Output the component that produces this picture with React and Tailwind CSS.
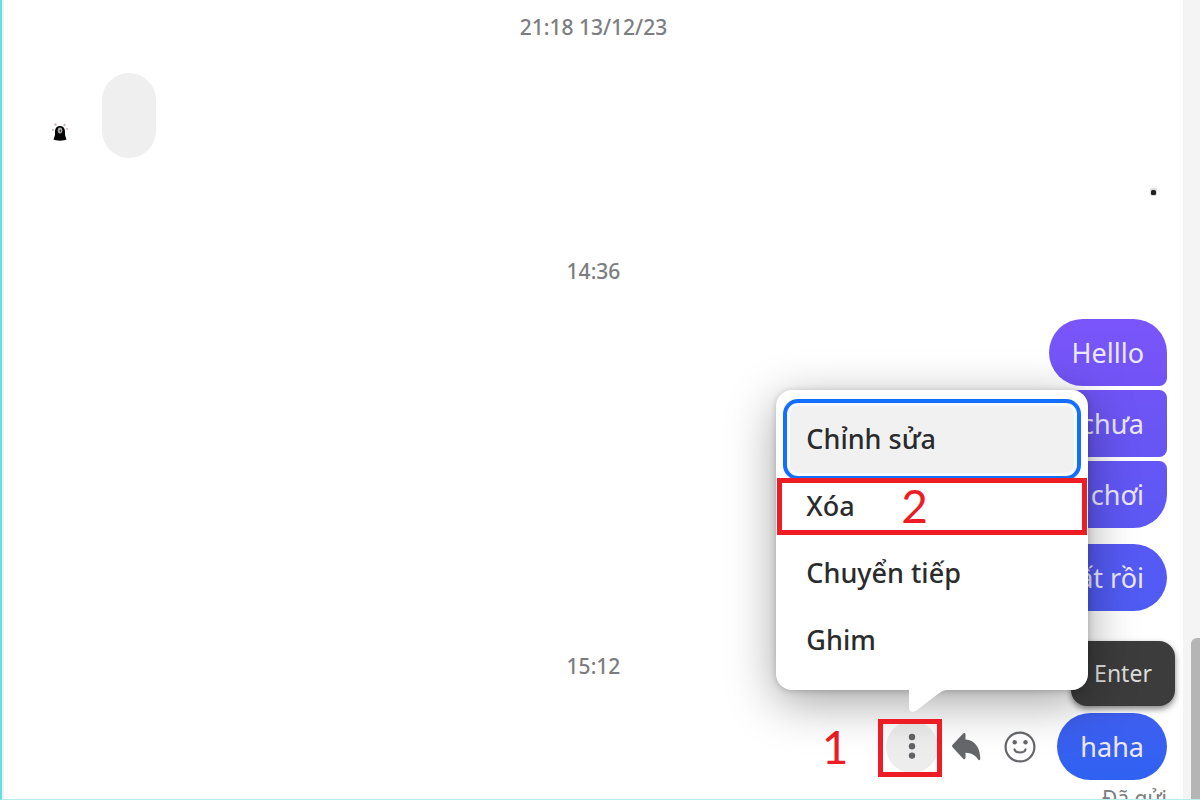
import React, { useState } from 'react';

const menuItems = ['Chỉnh sửa', 'Xóa', 'Chuyển tiếp', 'Ghim'];

const sentMessages = [
    { text: 'Helllo', className: 'rounded-[34px] rounded-br-lg bg-linear-to-b from-[#7a55fb] to-[#7154f5]' },
    { text: 'chưa', className: 'mt-1 min-w-[120px] rounded-r-lg rounded-l-[34px] bg-linear-to-b from-[#7054f6] to-[#6656f3]' },
    { text: 'chơi', className: 'mt-1 min-w-[120px] rounded-[34px] rounded-tr-lg bg-linear-to-b from-[#6556f5] to-[#5c58f4]' },
    { text: 'ất rồi', className: 'mt-4 min-w-[120px] rounded-[34px] bg-linear-to-b from-[#5759f4] to-[#4e5cf3]' },
];

const Timestamp = ({ children, className = '' }) => (
    <time className={`block text-center text-[21px] leading-7 font-medium text-[#7b7d80] ${className}`}>
        {children}
    </time>
);

const Bubble = ({ children, className = '' }) => (
    <p className={`flex h-[67px] items-center justify-end px-[23px] pt-0.5 text-[27px] text-[#ece9ff] ${className}`}>
        {children}
    </p>
);

const ReplyIcon = () => (
    <svg width="30" height="30" viewBox="0 0 30 30" fill="#65676b" aria-hidden="true">
        <path d="M14.500 2.400V7.500C23.500 8 29 15 29.300 26.500c0 1.800-1.600 2.200-2.400.8C24.500 23 20 20.800 14.500 20.700v5c0 1.500-1.300 2-2.300 1L1.800 15.600c-1-1-1-2.100 0-3.100L12.200 1.400c1-1 2.300-.5 2.300 1z" />
    </svg>
);

const SmileIcon = () => (
    <svg width="32" height="32" viewBox="0 0 32 32" fill="none" aria-hidden="true">
        <circle cx="16" cy="16" r="14.400" stroke="#65676b" strokeWidth="2.200" />
        <circle cx="10.700" cy="11.300" r="2.200" fill="#65676b" />
        <circle cx="21.500" cy="11.300" r="2.200" fill="#65676b" />
        <path d="M10.500 18.500c1.200 4 9.800 4 11 0" stroke="#65676b" strokeWidth="2.200" strokeLinecap="round" />
    </svg>
);

const DotsIcon = () => (
    <svg width="8" height="28" viewBox="0 0 8 28" fill="#606266" aria-hidden="true">
        <circle cx="4" cy="4" r="3.200" />
        <circle cx="4" cy="13.300" r="3.200" />
        <circle cx="4" cy="22.600" r="3.200" />
    </svg>
);

const Avatar = () => (
    <svg width="16" height="19" viewBox="0 0 16 19" aria-hidden="true">
        <path d="M1.500 16.500l1.500-4.500V9c0-4 2-6 5-6s5 2 5 6v3l1.500 4.500c-2 1.500-11 1.500-13 0z" fill="#050505" />
        <ellipse cx="8" cy="7.500" rx="2.300" ry="3" fill="#aaa" />
        <path d="M7 7.500l2-1v3z" fill="#333" />
        <g fill="#c9b5b3">
            <circle cx="3.500" cy="1.500" r="1.200" />
            <circle cx="12.500" cy="2" r="1.200" />
            <circle cx="1" cy="7" r="1" />
            <circle cx="15" cy="6" r="1" />
        </g>
    </svg>
);

const MessageMenu = ({ active, onSelect }) => (
    <div
        role="menu"
        className="absolute -right-[150px] bottom-full z-20 mb-[31px] w-[312px] rounded-2xl bg-white px-[14px] py-4 shadow-[0_12px_48px_rgba(0,0,0,0.36),0_1px_6px_rgba(0,0,0,0.2)]"
    >
        {menuItems.map((item) => (
            <div key={item} className="relative">
                <button
                    type="button"
                    role="menuitem"
                    onClick={() => onSelect(item)}
                    className={`flex h-[67px] w-full cursor-pointer items-center rounded-lg px-4 text-left text-[27px] font-medium text-[#2a2b2d] outline-none ${
                        active === item
                            ? 'bg-[#f1f1f1] ring-4 ring-[#146eff] ring-offset-3 ring-offset-[#f7faff]'
                            : ''
                    }`}
                >
                    {item}
                </button>
                {item === 'Xóa' && (
                    <div className="pointer-events-none absolute inset-x-[-13px] inset-y-[5px] flex items-center border-5 border-[#ee1c24] pl-[119px] font-[Lato,sans-serif] text-[46px] leading-none text-[#ee1c24]">
                        2
                    </div>
                )}
            </div>
        ))}
        <svg className="absolute top-full right-[140px]" width="40" height="22" viewBox="0 0 40 22" aria-hidden="true">
            <path d="M1 0v17c0 5 4 6 8 3L30 4c3-2.500 5-3.500 9-4z" fill="#fff" />
        </svg>
    </div>
);

const App = () => {
    const [active, setActive] = useState('Chỉnh sửa');
    const [open, setOpen] = useState(true);

    return (
        <div className="flex h-screen overflow-hidden border-b border-l-2 border-b-[#b5efe9] border-l-[#5fdfe6] bg-white font-['Noto_Sans',sans-serif]">
            <main className="flex-1 border-l-2 border-[#f7eeee] pt-[13px]">
                <Timestamp>21:18 13/12/23</Timestamp>

                {/* Received message */}
                <div className="mt-8 flex items-end gap-[34px] pl-12">
                    <div className="pb-4">
                        <Avatar />
                    </div>
                    <div className="h-[85px] w-[54px] rounded-[27px] bg-[#efefef]"></div>
                </div>

                {/* Seen marker */}
                <div className="mt-[30px] flex justify-end pr-[26px]">
                    <svg width="8" height="8" viewBox="0 0 8 8" aria-hidden="true">
                        <rect x="1" width="7" height="8" rx="2" fill="#ddd" />
                        <rect x="2" y="2" width="5" height="5" rx="1.500" fill="#222" />
                    </svg>
                </div>

                <Timestamp className="mt-[61px]">14:36</Timestamp>

                <div className="mt-[34px] flex flex-col items-end pr-4">
                    {sentMessages.map((message) => (
                        <Bubble key={message.text} className={message.className}>
                            {message.text}
                        </Bubble>
                    ))}
                </div>

                <Timestamp className="mt-[41px]">15:12</Timestamp>

                {/* Last message with its actions */}
                <div className="mt-[33px] flex items-center justify-end pr-4">
                    <div className="flex items-center gap-[2px] pr-[11px]">
                        <span className="pr-9 font-[Lato,sans-serif] text-[46px] leading-none text-[#ee1c24]">1</span>
                        <div className="relative">
                            <button
                                type="button"
                                aria-label="Xem thêm"
                                aria-expanded={open}
                                onClick={() => setOpen(!open)}
                                className="flex size-[52px] cursor-pointer items-center justify-center rounded-full bg-[#ededed]"
                            >
                                <DotsIcon />
                            </button>
                            {open && <MessageMenu active={active} onSelect={setActive} />}
                            <div className="pointer-events-none absolute -top-0.5 -right-1 -bottom-1 -left-2 z-20 border-5 border-[#ee1c24]"></div>
                        </div>
                        <button
                            type="button"
                            aria-label="Trả lời"
                            className="flex size-[52px] cursor-pointer items-center justify-center"
                        >
                            <ReplyIcon />
                        </button>
                        <button
                            type="button"
                            aria-label="Bày tỏ cảm xúc"
                            className="flex size-[52px] cursor-pointer items-center justify-center"
                        >
                            <SmileIcon />
                        </button>
                    </div>
                    <div className="relative">
                        <Bubble className="rounded-[34px] bg-linear-to-b from-[#3e5eef] to-[#2f62f2]">haha</Bubble>
                        <div
                            role="tooltip"
                            className="absolute -right-2 bottom-full z-10 mb-[7px] flex h-[65px] w-[104px] items-center justify-center rounded-2xl bg-[#3c3c3c] text-[23px] text-[#dddddd] shadow-[0_3px_6px_rgba(0,0,0,0.5)]"
                        >
                            Enter
                        </div>
                    </div>
                </div>
                <p className="mt-1 pr-4 text-right text-[21px] leading-7 text-[#7b7d80]">Đã gửi</p>
            </main>

            {/* Scrollbar */}
            <div className="flex w-[17px] flex-col justify-end bg-[#f4f4f4] pl-2">
                <div className="h-[161px] rounded-tl-md bg-[#b5b5b5]"></div>
            </div>
        </div>
    );
};

export default App;
